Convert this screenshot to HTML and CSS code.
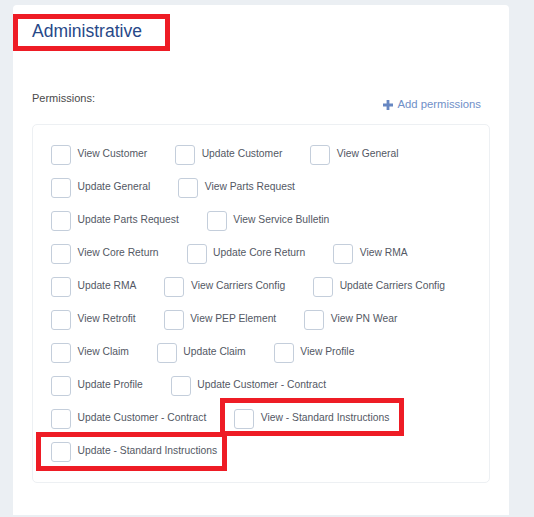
FILE: index.html
```html
<!DOCTYPE html>
<html lang="en">
<head>
<meta charset="utf-8">
<title>Administrative</title>
<link rel="stylesheet" href="styles.css">
</head>
<body>
<div class="card">
  <h2 class="title annotated">Administrative</h2>
  <div class="perm-head">
    <span class="perm-label">Permissions:</span>
    <a class="add-link" href="#">
      <svg class="plus" width="10" height="10" viewBox="0 0 10 10" aria-hidden="true"><path d="M3.6 0h2.8v3.6H10v2.8H6.4V10H3.6V6.4H0V3.6h3.6z" fill="currentColor"/></svg>
      Add permissions
    </a>
  </div>
  <div class="perm-box">
    <div class="perm-row">
      <label class="perm"><span class="box"></span><span class="txt">View Customer</span></label>
      <label class="perm"><span class="box"></span><span class="txt">Update Customer</span></label>
      <label class="perm"><span class="box"></span><span class="txt">View General</span></label>
    </div>
    <div class="perm-row">
      <label class="perm"><span class="box"></span><span class="txt">Update General</span></label>
      <label class="perm"><span class="box"></span><span class="txt">View Parts Request</span></label>
    </div>
    <div class="perm-row">
      <label class="perm"><span class="box"></span><span class="txt">Update Parts Request</span></label>
      <label class="perm"><span class="box"></span><span class="txt">View Service Bulletin</span></label>
    </div>
    <div class="perm-row">
      <label class="perm"><span class="box"></span><span class="txt">View Core Return</span></label>
      <label class="perm"><span class="box"></span><span class="txt">Update Core Return</span></label>
      <label class="perm"><span class="box"></span><span class="txt">View RMA</span></label>
    </div>
    <div class="perm-row">
      <label class="perm"><span class="box"></span><span class="txt">Update RMA</span></label>
      <label class="perm"><span class="box"></span><span class="txt">View Carriers Config</span></label>
      <label class="perm"><span class="box"></span><span class="txt">Update Carriers Config</span></label>
    </div>
    <div class="perm-row">
      <label class="perm"><span class="box"></span><span class="txt">View Retrofit</span></label>
      <label class="perm"><span class="box"></span><span class="txt">View PEP Element</span></label>
      <label class="perm"><span class="box"></span><span class="txt">View PN Wear</span></label>
    </div>
    <div class="perm-row">
      <label class="perm"><span class="box"></span><span class="txt">View Claim</span></label>
      <label class="perm"><span class="box"></span><span class="txt">Update Claim</span></label>
      <label class="perm"><span class="box"></span><span class="txt">View Profile</span></label>
    </div>
    <div class="perm-row">
      <label class="perm"><span class="box"></span><span class="txt">Update Profile</span></label>
      <label class="perm"><span class="box"></span><span class="txt">Update Customer - Contract</span></label>
    </div>
    <div class="perm-row">
      <label class="perm"><span class="box"></span><span class="txt">Update Customer - Contract</span></label>
      <label class="perm annotated mark-view"><span class="box"></span><span class="txt">View - Standard Instructions</span></label>
    </div>
    <div class="perm-row">
      <label class="perm annotated mark-update"><span class="box"></span><span class="txt">Update - Standard Instructions</span></label>
    </div>
  </div>
</div>
</body>
</html>
```

FILE: styles.css
```css
html, body {
  margin: 0;
  padding: 0;
}

body {
  background: #ebeff3;
  font-family: "Liberation Sans", Arial, sans-serif;
  height: 517px;
  overflow: hidden;
}

.card {
  margin: 5px 0 0 13px;
  width: 496px;
  min-height: 510px;
  box-sizing: border-box;
  background: #ffffff;
  border-radius: 4px 4px 0 0;
  padding: 16px 19px 0 19px;
}

.title {
  display: inline-block;
  margin: 0;
  font-size: 17.5px;
  line-height: 20px;
  font-weight: normal;
  color: #274888;
}

.annotated {
  position: relative;
}

.annotated::after {
  content: "";
  position: absolute;
  border: 5px solid #ee1c25;
  pointer-events: none;
}

.title::after {
  left: -19px;
  top: -7px;
  right: -28px;
  bottom: -10px;
}

.perm-head {
  display: flex;
  justify-content: space-between;
  align-items: flex-start;
  margin-top: 51px;
}

.perm-label {
  font-size: 11px;
  line-height: 13px;
  color: #4a4a4a;
}

.add-link {
  display: flex;
  align-items: center;
  gap: 4.5px;
  margin-top: 6px;
  margin-right: 9px;
  font-size: 11.3px;
  line-height: 13px;
  color: #7090c8;
  text-decoration: none;
}

.plus {
  display: block;
  color: #6787c2;
}

.perm-box {
  margin-top: 13px;
  border: 1px solid #edf0f3;
  border-radius: 5px;
  padding: 20px 18px 20px 18px;
  display: flex;
  flex-direction: column;
  gap: 13px;
}

.perm-row {
  display: flex;
  gap: 28px;
}

.perm {
  display: flex;
  align-items: center;
  gap: 6.5px;
  height: 20px;
}

.box {
  width: 20px;
  height: 20px;
  box-sizing: border-box;
  border: 1px solid #c4cedb;
  border-radius: 3px;
  background: #ffffff;
  flex: none;
}

.txt {
  font-size: 10.3px;
  line-height: 12px;
  color: #535864;
  white-space: nowrap;
  position: relative;
  top: -1px;
}

.mark-view::after {
  left: -14px;
  top: -11px;
  right: -15px;
  bottom: -7px;
}

.mark-update::after {
  left: -15px;
  top: -10px;
  right: -10px;
  bottom: -9px;
}
```
